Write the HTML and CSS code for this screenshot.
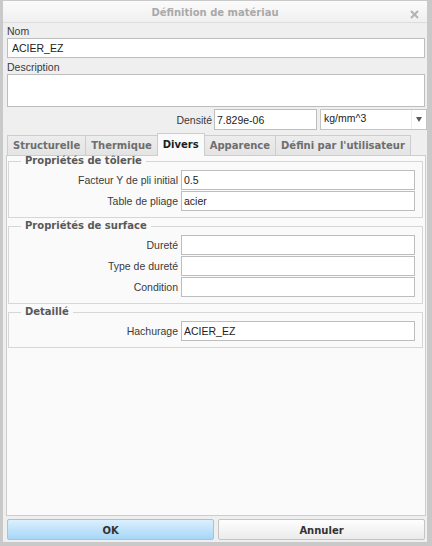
FILE: index.html
```html
<!DOCTYPE html>
<html lang="fr">
<head>
  <meta charset="UTF-8" />
  <meta name="viewport" content="width=device-width, initial-scale=1.0" />
  <title>Définition de matériau</title>
  <link rel="stylesheet" href="styles.css">
</head>
<body>
  <div class="window">
    <div class="titlebar">
      <span class="title">Définition de matériau</span>
      <svg class="close" width="9" height="9" viewBox="0 0 9 9">
        <path d="M1 1 L8 8 M8 1 L1 8" stroke="#b3b3b3" stroke-width="2" />
      </svg>
    </div>

    <div class="content">
      <div class="field-label">Nom</div>
      <input type="text" class="text-input name-input" value="ACIER_EZ" />
      <div class="field-label desc-label">Description</div>
      <textarea class="desc-input"></textarea>

      <div class="density-row">
        <span class="row-label">Densité</span>
        <input type="text" class="text-input density-input" value="7.829e-06" />
        <div class="unit-select">
          <span class="unit-value">kg/mm^3</span>
          <span class="unit-arrow"></span>
        </div>
      </div>

      <!-- tabs -->
      <div class="tabs">
        <div class="tab">Structurelle</div>
        <div class="tab">Thermique</div>
        <div class="tab active">Divers</div>
        <div class="tab">Apparence</div>
        <div class="tab">Défini par l'utilisateur</div>
      </div>

      <div class="tab-panel">
        <fieldset class="group">
          <legend>Propriétés de tôlerie</legend>
          <div class="row">
            <span class="row-label">Facteur Y de pli initial</span>
            <input type="text" class="text-input group-input" value="0.5" />
          </div>
          <div class="row">
            <span class="row-label">Table de pliage</span>
            <input type="text" class="text-input group-input" value="acier" />
          </div>
        </fieldset>

        <fieldset class="group">
          <legend>Propriétés de surface</legend>
          <div class="row">
            <span class="row-label">Dureté</span>
            <input type="text" class="text-input group-input" value="" />
          </div>
          <div class="row">
            <span class="row-label">Type de dureté</span>
            <input type="text" class="text-input group-input" value="" />
          </div>
          <div class="row">
            <span class="row-label">Condition</span>
            <input type="text" class="text-input group-input" value="" />
          </div>
        </fieldset>

        <fieldset class="group">
          <legend>Detaillé</legend>
          <div class="row">
            <span class="row-label">Hachurage</span>
            <input type="text" class="text-input group-input" value="ACIER_EZ" />
          </div>
        </fieldset>
      </div>

      <div class="buttons">
        <button class="btn btn-ok">OK</button>
        <button class="btn btn-cancel">Annuler</button>
      </div>
    </div>
  </div>
</body>
</html>
```

FILE: styles.css
```css
body {
  margin: 0;
  background-color: #c9c9c9;
  font-family: 'Liberation Sans', Arial, sans-serif;
  font-size: 10.5px;
  color: #3a3a3a;
}

.window {
  width: 424px;
  height: 541px;
  margin: 1px 0 0 3px;
  background-color: #efefef;
  display: flex;
  flex-direction: column;
}

.titlebar {
  height: 21px;
  border-bottom: 1px solid #dcdcdc;
  background: linear-gradient(to bottom, #fbfbfb, #f0f0f0);
  display: flex;
  align-items: center;
  justify-content: center;
  position: relative;
}

.title {
  font-family: 'DejaVu Sans', Verdana, sans-serif;
  font-weight: bold;
  font-size: 10px;
  color: #a9a9a9;
  padding-top: 2px;
}

.close {
  position: absolute;
  right: 8px;
  top: 9px;
}

.content {
  flex: 1;
  display: flex;
  flex-direction: column;
  padding: 0 2px 0 4px;
}

.field-label {
  line-height: 13px;
  padding-top: 2px;
}

.desc-label {
  margin-top: 1px;
}

.text-input {
  box-sizing: border-box;
  height: 20px;
  border: 1px solid #bdbdbd;
  background: #fff;
  font-family: 'Liberation Sans', Arial, sans-serif;
  font-size: 10.5px;
  color: #222;
  padding: 0 2px;
  margin: 0;
  outline: none;
}

.name-input {
  width: 100%;
  padding-left: 4px;
}

.desc-input {
  box-sizing: border-box;
  width: 100%;
  height: 33px;
  border: 1px solid #bdbdbd;
  background: #fff;
  resize: none;
  margin: 0;
  display: block;
}

.density-row {
  display: flex;
  justify-content: flex-end;
  align-items: center;
  margin-top: 2px;
  margin-right: -2px;
  height: 21px;
}

.row-label {
  white-space: nowrap;
}

.density-input {
  width: 103px;
  height: 21px;
  margin-left: 2px;
}

.unit-select {
  box-sizing: border-box;
  width: 107px;
  height: 21px;
  margin-left: 3px;
  border: 1px solid #c4c4c4;
  background: #fff;
  display: flex;
  align-items: center;
}

.unit-value {
  flex: 1;
  padding-left: 3px;
  padding-bottom: 3px;
  color: #222;
}

.unit-arrow {
  width: 14px;
  height: 19px;
  border-left: 1px solid #ececec;
  position: relative;
}

.unit-arrow:after {
  content: "";
  position: absolute;
  left: 4px;
  top: 7px;
  border-left: 3.5px solid transparent;
  border-right: 3.5px solid transparent;
  border-top: 5px solid #5a5a5a;
}

.tabs {
  display: flex;
  align-items: flex-end;
  margin-top: 3px;
  height: 22px;
  position: relative;
  z-index: 1;
}

.tab {
  box-sizing: border-box;
  height: 20px;
  padding: 0 5px;
  margin-right: -1px;
  border: 1px solid #cdcdcd;
  border-bottom: none;
  background: linear-gradient(to bottom, #ededed, #e4e4e4);
  font-family: 'DejaVu Sans', Verdana, sans-serif;
  font-weight: bold;
  font-size: 10px;
  line-height: 20px;
  color: #6e6e6e;
  white-space: nowrap;
}

.tab.active {
  height: 23px;
  margin-bottom: -1px;
  background: #fafafa;
  color: #1e1e1e;
  line-height: 22px;
  position: relative;
}

.tab:last-child {
  margin-right: 0;
}

.tab-panel {
  flex: 1;
  margin: 0 -1px;
  padding: 0 1px;
  border: 1px solid #cdcdcd;
  background: #fafafa;
}

.group {
  margin: 3px 1px 0 0;
  padding: 4px 7px 6px 0;
  border: 1px solid #d6d6d6;
  min-width: 0;
}

.group:first-child {
  margin-top: 0;
}

.group legend {
  margin-left: 12px;
  padding: 0 4px;
  font-family: 'DejaVu Sans', Verdana, sans-serif;
  font-weight: bold;
  font-size: 10px;
  line-height: 10px;
  color: #595959;
}

.row {
  display: flex;
  justify-content: flex-end;
  align-items: center;
  gap: 3px;
  margin-bottom: 1px;
}

.row:last-child {
  margin-bottom: 0;
}

.group-input {
  width: 234px;
}

.buttons {
  display: flex;
  gap: 4px;
  margin: 3px 0 2px;
}

.btn {
  flex: 1;
  height: 21px;
  border-radius: 2px;
  font-family: 'DejaVu Sans', Verdana, sans-serif;
  font-weight: bold;
  font-size: 10px;
  color: #333;
  padding: 1px 0 0;
}

.btn-ok {
  border: 1px solid #93c9ee;
  background: linear-gradient(to bottom, #dcf0fd, #a6d6f8);
}

.btn-cancel {
  border: 1px solid #c4c4c4;
  background: linear-gradient(to bottom, #fefefe, #ebebeb);
}
```
